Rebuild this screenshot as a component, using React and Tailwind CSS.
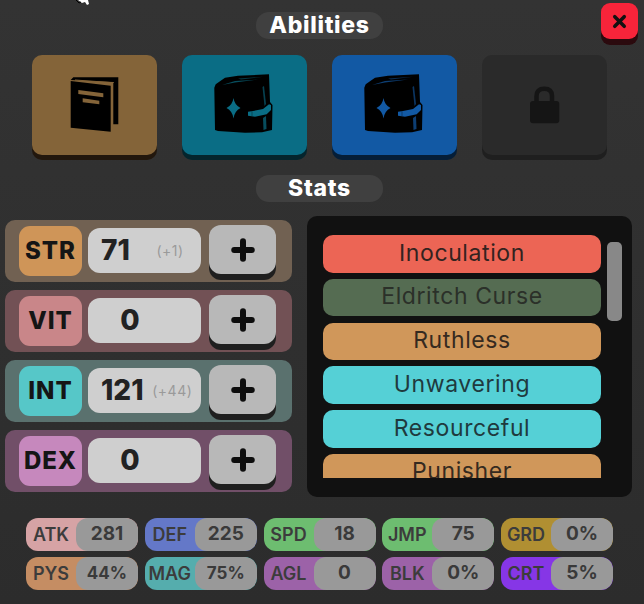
import { Plus, X } from "lucide-react";

const font = { fontFamily: '"Inter", "Liberation Sans", sans-serif' };

function PlainBook({ color }) {
  return (
    <svg width="70" height="75" viewBox="0 0 70 75" className="block mb-[5px]">
      <path d="M10.7 15 L13.3 12.3 L58.3 12.3 L58.3 59.3 L53.3 59.3 L53.3 17 Z" fill="#000" />
      <path d="M10.7 16 L50.7 20.7 L50.7 66.7 L10.7 62.7 Z" fill="#000" />
      <path d="M15 14.6 L54 17.2 L54 18 L15 15.4 Z" fill={color} />
      <path d="M18.3 25 L43.3 28.3 L43.3 32.3 L18.3 29 Z" fill={color} />
      <path d="M22.7 33.3 L39.3 35.7 L39.3 39.3 L22.7 37.3 Z" fill={color} />
    </svg>
  );
}

function SpellBook({ color }) {
  return (
    <svg width="80" height="80" viewBox="0 0 80 80" className="block">
      <path d="M9.3 22.7 L10.7 19.3 L20 12.7 L33 10.7 L64 9.3 L65 37 L67.5 40 L67 65 L57 67.3 L40 67.7 L13 66 L10 65 Z" fill="#000" />
      <path d="M17 20 L30 16 L53 14.5 L30 17.5 Z" fill={color} opacity="0.7" />
      <path d="M33 13.5 L58 11.8 L36 14.5 Z" fill={color} opacity="0.5" />
      <path d="M57.5 22 L59 21 L61 39 L59.5 41 Z" fill={color} opacity="0.6" />
      <path d="M58 53 L61 51 L61.5 64 L58.5 65 Z" fill={color} opacity="0.7" />
      <path d="M28.5 33 Q29.5 40 35.5 43 Q29.5 46 28.5 53.5 Q27.5 46 21.5 43 Q27.5 40 28.5 33 Z" fill={color} />
      <path d="M43 46.7 L48 46 L58 44 L64 39.3 L66 40 L66 45 L61.7 49.3 L50 51.7 L43 50.7 Z" fill={color} />
      <path d="M47 46.5 L47 51" stroke="#000" strokeOpacity="0.35" />
    </svg>
  );
}

function LockIcon() {
  return (
    <svg width="60" height="60" viewBox="0 0 60 60" className="block">
      <path d="M21.5 27 V21 Q21.5 13.7 29.3 13.7 Q37 13.7 37 21 V27" stroke="#151515" strokeWidth="4.5" fill="none" />
      <rect x="15" y="26" width="29.3" height="22.3" rx="3" fill="#151515" />
    </svg>
  );
}

function AbilityButton({ bg, shadow, children }) {
  return (
    <div className={`w-[125px] h-[100px] rounded-[10px] flex items-center justify-center ${bg} ${shadow}`}>
      {children}
    </div>
  );
}

function Pill({ children }) {
  return (
    <div className="w-[127px] h-[27px] ml-[256px] rounded-[13px] bg-[#404040] text-white text-[23px] font-extrabold tracking-[0.7px] flex items-center justify-center">
      {children}
    </div>
  );
}

const stats = [
  { name: "STR", value: "71", bonus: "(+1)", row: "bg-[#716152]", tag: "bg-[#cf9558]" },
  { name: "VIT", value: "0", row: "bg-[#725155]", tag: "bg-[#c98689]" },
  { name: "INT", value: "121", bonus: "(+44)", row: "bg-[#5a716e]", tag: "bg-[#56c7c8]" },
  { name: "DEX", value: "0", row: "bg-[#714f68]", tag: "bg-[#c688bd]" },
];

const perks = [
  { name: "Inoculation", bg: "bg-[#ec6555]", text: "text-[#33231f]" },
  { name: "Eldritch Curse", bg: "bg-[#556c52]", text: "text-[#2b3029]" },
  { name: "Ruthless", bg: "bg-[#d0975a]", text: "text-[#352a20]" },
  { name: "Unwavering", bg: "bg-[#55d0d6]", text: "text-[#1f3a3e]" },
  { name: "Resourceful", bg: "bg-[#55d0d6]", text: "text-[#1f3a3e]" },
  { name: "Punisher", bg: "bg-[#d0975a]", text: "text-[#352a20]" },
];

const chips = [
  { name: "ATK", value: "281", bg: "bg-[#d6a3a5]", size: "text-[19px]" },
  { name: "DEF", value: "225", bg: "bg-[#6478c8]", size: "text-[19px]" },
  { name: "SPD", value: "18", bg: "bg-[#6dbd70]", size: "text-[19px]" },
  { name: "JMP", value: "75", bg: "bg-[#6dbd70]", size: "text-[19px]" },
  { name: "GRD", value: "0%", bg: "bg-[#b08f32]", size: "text-[19px]" },
  { name: "PYS", value: "44%", bg: "bg-[#c58d63]", size: "text-[17px]" },
  { name: "MAG", value: "75%", bg: "bg-[#55adad]", size: "text-[17px]" },
  { name: "AGL", value: "0", bg: "bg-[#9c62a8]", size: "text-[19px]" },
  { name: "BLK", value: "0%", bg: "bg-[#9c62a8]", size: "text-[19px]" },
  { name: "CRT", value: "5%", bg: "bg-[#8636e6]", size: "text-[19px]" },
];

export default function App() {
  return (
    <div
      className="relative w-[644px] h-[604px] overflow-hidden bg-gradient-to-b from-[#333333] to-[#2c2c2c] pt-3"
      style={font}
    >
      {/* cursor poking in at the top edge */}
      <svg width="14" height="6" viewBox="0 0 14 6" className="absolute left-[76px] top-0">
        <path d="M2 0 L6 3 L9 2 L11 5 L13 4 L12 0 Z" fill="#fff" />
        <path d="M0 0 L3 3 L5 2" stroke="#000" fill="none" />
      </svg>

      <button className="absolute left-[601px] top-[3px] w-[37px] h-[36px] rounded-[9px] bg-[#f7243a] shadow-[0_6px_0_#2b0a0e] flex items-center justify-center">
        <X size={19} strokeWidth={4.5} color="#111" />
      </button>

      <Pill>Abilities</Pill>

      <div className="flex gap-[25px] pl-[32px] mt-4">
        <AbilityButton bg="bg-[#846439]" shadow="shadow-[0_5px_0_#22170d]">
          <PlainBook color="#846439" />
        </AbilityButton>
        <AbilityButton bg="bg-[#0a6d85]" shadow="shadow-[0_5px_0_#04252d]">
          <SpellBook color="#0a6d85" />
        </AbilityButton>
        <AbilityButton bg="bg-[#1259a4]" shadow="shadow-[0_5px_0_#051e38]">
          <SpellBook color="#1259a4" />
        </AbilityButton>
        <AbilityButton bg="bg-[#2a2a2a]" shadow="shadow-[0_5px_0_#1f1f1f]">
          <LockIcon />
        </AbilityButton>
      </div>

      <div className="mt-5">
        <Pill>Stats</Pill>
      </div>

      <div className="flex items-start mt-[14px] pl-[5px]">
        <div className="flex flex-col gap-2 pt-1">
          {stats.map((s) => (
            <div key={s.name} className={`w-[287px] h-[62px] rounded-[10px] pl-[14px] flex items-center ${s.row}`}>
              <div className={`w-[63px] h-[50px] rounded-[11px] flex items-center justify-center text-[24px] font-extrabold tracking-[1px] text-[#151515] ${s.tag}`}>
                {s.name}
              </div>
              <div className="w-[113px] h-[45px] ml-[6px] mb-[2px] rounded-[12px] bg-[#cfcfcf] flex items-center">
                {s.bonus ? (
                  <>
                    <span className="pl-[13px] text-[28px] font-extrabold text-[#222222]">{s.value}</span>
                    <span className="ml-auto w-[62px] text-center text-[14px] tracking-[0.5px] text-[#9a9a9a]">{s.bonus}</span>
                  </>
                ) : (
                  <span className="w-[84px] text-center text-[28px] font-extrabold text-[#222222]">{s.value}</span>
                )}
              </div>
              <button className="w-[67px] h-[49px] ml-2 mb-[3px] rounded-[12px] bg-[#b8b8b8] shadow-[0_6px_0_#1f1f1f] flex items-center justify-center">
                <Plus size={30} strokeWidth={4.8} color="#0d0d0d" />
              </button>
            </div>
          ))}
        </div>

        <div className="ml-[15px] w-[325px] h-[281px] rounded-[10px] bg-[#111111] pl-4 pt-[19px] flex items-start">
          <div className="w-[278px] h-[243px] overflow-hidden flex flex-col gap-[6.25px]">
            {perks.map((p) => (
              <div key={p.name} className={`shrink-0 h-[37.5px] pb-[2px] rounded-[10px] flex items-center justify-center text-[23px] tracking-[0.6px] ${p.bg} ${p.text}`}>
                {p.name}
              </div>
            ))}
          </div>
          <div className="ml-[6px] mt-[7px] w-[15px] h-[79px] rounded-[5px] bg-[#888888]" />
        </div>
      </div>

      <div className="grid grid-cols-[repeat(5,112px)] gap-x-[6.75px] gap-y-[6px] mt-[21px] pl-[26px]">
        {chips.map((c) => (
          <div key={c.name} className={`h-[33px] rounded-[12px] flex items-center justify-between overflow-hidden ${c.bg}`}>
            <span className="flex-1 text-center text-[18px] font-semibold text-[#3c3c3c]">{c.name}</span>
            <span className={`w-[62px] h-full rounded-[12px] bg-[#999999] flex items-center justify-center font-bold text-[#3a3a3a] ${c.size}`}>
              {c.value}
            </span>
          </div>
        ))}
      </div>
    </div>
  );
}
